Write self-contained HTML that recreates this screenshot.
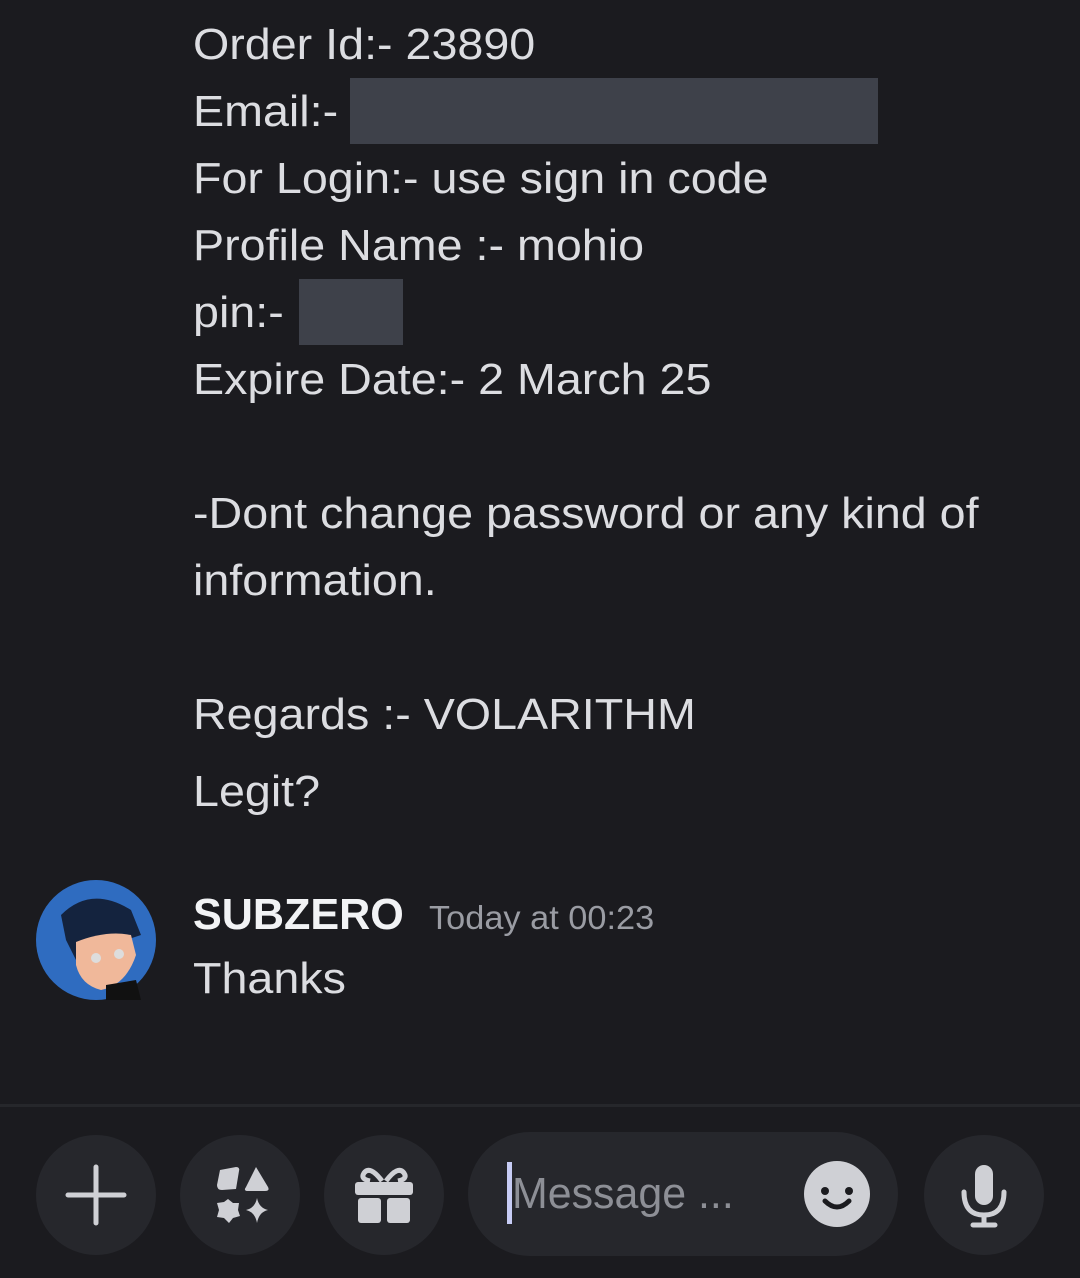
<!DOCTYPE html>
<html><head><meta charset="utf-8"><style>
html,body{margin:0;padding:0;background:#1b1b1f;}
body{width:1080px;height:1278px;position:relative;overflow:hidden;font-family:"Liberation Sans",sans-serif;color:#dcdde1;}
.l{position:absolute;left:193px;height:67px;line-height:67px;font-size:44px;white-space:nowrap;transform:scaleX(1.06);transform-origin:left center;}
.red{position:absolute;background:#3e414a;}
.circ{position:absolute;width:120px;height:120px;border-radius:60px;background:#26272c;top:1135px;}
</style></head><body>
<div class="l" style="top:11px">Order Id:- 23890</div>
<div class="l" style="top:78px">Email:-</div>
<div class="red" style="left:350px;top:78px;width:528px;height:66px"></div>
<div class="l" style="top:145px">For Login:- use sign in code</div>
<div class="l" style="top:212px">Profile Name :- mohio</div>
<div class="l" style="top:279px">pin:-</div>
<div class="red" style="left:299px;top:279px;width:104px;height:66px"></div>
<div class="l" style="top:346px">Expire Date:- 2 March 25</div>
<div class="l" style="top:480px">-Dont change password or any kind of</div>
<div class="l" style="top:547px">information.</div>
<div class="l" style="top:681px">Regards :- VOLARITHM</div>
<div class="l" style="top:758px">Legit?</div>

<svg style="position:absolute;left:36px;top:880px" width="120" height="120" viewBox="0 0 120 120">
<circle cx="60" cy="60" r="60" fill="#2f6cc0"/>
<path d="M25 35 Q55 5 95 30 L105 55 L90 60 L40 80 L30 60Z" fill="#14233e"/>
<path d="M40 62 Q70 50 95 55 L100 75 Q90 105 65 110 Q45 105 40 85Z" fill="#f0b89a"/>
<path d="M70 105 L100 100 L105 120 L70 120Z" fill="#111"/>
<circle cx="60" cy="78" r="5" fill="#ddd"/><circle cx="83" cy="74" r="5" fill="#ddd"/>
</svg>
<div style="position:absolute;left:193px;top:885px;height:60px;line-height:60px;font-size:44px;font-weight:bold;color:#f2f3f5;transform:scaleX(0.98);transform-origin:left center;white-space:nowrap">SUBZERO</div>
<div style="position:absolute;left:429px;top:890px;height:56px;line-height:56px;font-size:33px;color:#9a9ca3;transform:scaleX(1.04);transform-origin:left center;white-space:nowrap">Today at 00:23</div>
<div class="l" style="top:945px">Thanks</div>

<div style="position:absolute;left:0;top:1104px;width:1080px;height:3px;background:#26272b"></div>
<div class="circ" style="left:36px"></div>
<div class="circ" style="left:180px"></div>
<div class="circ" style="left:324px"></div>
<div style="position:absolute;left:468px;top:1132px;width:430px;height:124px;border-radius:62px;background:#26272c"></div>
<div class="circ" style="left:924px"></div>
<svg style="position:absolute;left:36px;top:1135px" width="120" height="120"><path d="M60 32V88M32 60H88" stroke="#cfd0d5" stroke-width="5" stroke-linecap="round"/></svg>
<svg style="position:absolute;left:180px;top:1135px" width="120" height="120" fill="#cfd0d5">
<path d="M40 35 L56 32 Q60 32 59 36 L56 54 L42 55 Q37 55 37 50Z"/>
<path d="M76 32 L88 52 Q90 56 85 56 L68 56 Q63 56 66 52Z"/>
<path d="M48 64 L53 68 L59 68 L58 75 L60 81 L53 83 L49 88 L44 83 L37 82 L39 75 L37 68 L44 67Z"/>
<path d="M77 63 Q79 73 88 75 Q79 77 77 88 Q75 77 66 75 Q75 73 77 63Z"/>
</svg>
<svg style="position:absolute;left:324px;top:1135px" width="120" height="120" fill="#cfd0d5">
<rect x="31" y="47" width="58" height="13" rx="3"/><rect x="34" y="63" width="23" height="25" rx="3"/><rect x="63" y="63" width="23" height="25" rx="3"/>
<path d="M58 46 Q46 30 40 38 Q36 44 46 46" fill="none" stroke="#cfd0d5" stroke-width="5"/>
<path d="M62 46 Q74 30 80 38 Q84 44 74 46" fill="none" stroke="#cfd0d5" stroke-width="5"/>
</svg>
<div style="position:absolute;left:507px;top:1162px;width:5px;height:62px;background:#c7ccf5"></div>
<div style="position:absolute;left:512px;top:1163px;height:62px;line-height:62px;font-size:44px;color:#8d8f96;transform:scaleX(0.975);transform-origin:left center;white-space:nowrap">Message ...</div>
<svg style="position:absolute;left:802px;top:1160px" width="70" height="70"><ellipse cx="35" cy="34" rx="33" ry="33" fill="#cfd0d5"/><circle cx="23" cy="31" r="4" fill="#1b1b1f"/><circle cx="47" cy="31" r="4" fill="#1b1b1f"/><path d="M23 41 Q35 53 47 41" fill="none" stroke="#1b1b1f" stroke-width="5" stroke-linecap="round"/></svg>
<svg style="position:absolute;left:924px;top:1135px" width="120" height="120" fill="none" stroke="#cfd0d5" stroke-linecap="round">
<rect x="51" y="30" width="18" height="40" rx="9" fill="#cfd0d5" stroke="none"/>
<path d="M40 57 Q40 80 60 80 Q80 80 80 57" stroke-width="5"/>
<path d="M60 80V90M49 90H71" stroke-width="5"/>
</svg>
</body></html>
